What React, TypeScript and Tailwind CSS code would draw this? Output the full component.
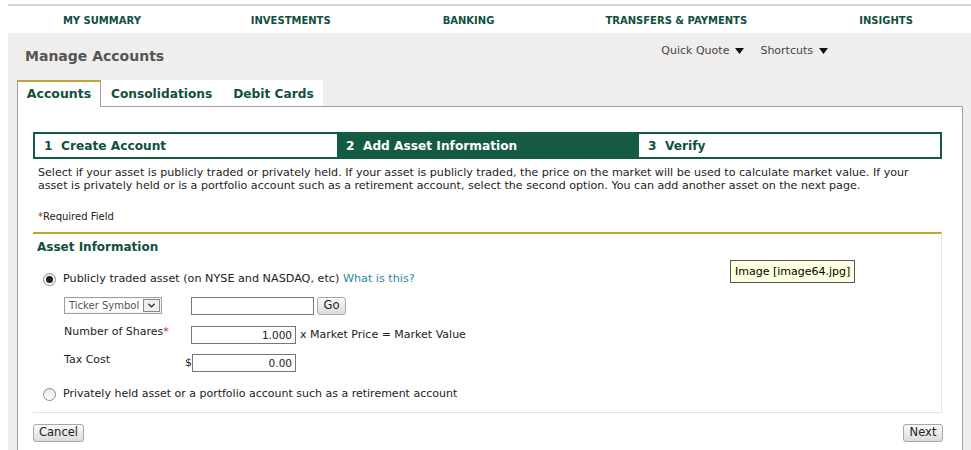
import { ChevronDown } from 'lucide-react';

const navItems = [
  { label: 'MY SUMMARY', w: 'w-[188px]' },
  { label: 'INVESTMENTS', w: 'w-[190px]' },
  { label: 'BANKING', w: 'w-[166px]' },
  { label: 'TRANSFERS & PAYMENTS', w: 'w-[250px]' },
  { label: 'INSIGHTS', w: 'w-[170px]' },
];

const Caret = () => (
  <svg width="9" height="6" viewBox="0 0 9 6" className="ml-[6px] inline-block">
    <path d="M0 0 L9 0 L4.5 6 Z" fill="#111" />
  </svg>
);

const Radio = ({ checked }: { checked?: boolean }) => (
  <span className="w-[13px] h-[13px] rounded-full border border-[#8a8a8a] bg-gradient-to-b from-[#e8e8e8] to-white flex items-center justify-center shrink-0">
    {checked && <span className="w-[7px] h-[7px] rounded-full bg-[#222]" />}
  </span>
);

const Btn = ({ children, cls }: { children: React.ReactNode; cls: string }) => (
  <button className={`h-[18px] rounded-[3px] border border-[#a8a8a8] bg-gradient-to-b from-[#fafafa] to-[#dcdcdc] text-[11.5px] text-[#222] leading-none flex items-center justify-center ${cls}`}>
    {children}
  </button>
);

export default function App() {
  return (
    <div className="w-[971px] h-[450px] overflow-hidden bg-white pl-[8px] text-[#222] font-['DejaVu_Sans',Verdana,sans-serif]">
      <div className="mt-[4px] h-[2px] bg-[#dcd5cc]" />
      <nav className="h-[27px] flex items-center pt-[2px]">
        {navItems.map((n) => (
          <div key={n.label} className={`${n.w} text-center text-[10px] font-bold text-[#0f5040]`}>
            {n.label}
          </div>
        ))}
      </nav>
      <div className="bg-[#f0eeec] h-[417px] pl-[9px] pr-[8px]">
        <div className="flex h-[47px]">
          <h1 className="pt-[13px] pl-[8px] text-[14px] font-bold text-[#555]">Manage Accounts</h1>
          <div className="ml-auto mr-[135px] pt-[10px] flex items-start text-[11px] text-[#444] gap-[16px]">
            <span className="flex items-center">Quick Quote<Caret /></span>
            <span className="flex items-center">Shortcuts<Caret /></span>
          </div>
        </div>
        <div className="flex h-[27px]">
          <div className="w-[84px] bg-white border-t-2 border-[#c5a23a] border-l border-r border-l-[#a0a0a0] border-r-[#a0a0a0] flex items-center justify-center text-[12.5px] font-bold text-[#0f5040]">
            Accounts
          </div>
          <div className="w-[222px] bg-white border-b border-[#a0a0a0] flex items-center text-[12.2px] font-bold text-[#0f5040] pl-[10px] pt-[2px] gap-[21px]">
            <span>Consolidations</span>
            <span>Debit Cards</span>
          </div>
          <div className="flex-1 border-b border-[#a0a0a0]" />
        </div>
        <div className="bg-white border-l border-r border-[#a0a0a0] h-[343px] pl-[15px] pr-[20px] pt-[25px]">
          <div className="h-[27px] border-2 border-[#155a43] flex text-[12.2px] font-bold">
            <div className="w-[302px] flex items-center pl-[9px] pt-[2px] text-[#0f5040]">1&nbsp;&nbsp;Create Account</div>
            <div className="w-[302px] flex items-center pl-[9px] pt-[2px] bg-[#155a43] text-white">2&nbsp;&nbsp;Add Asset Information</div>
            <div className="flex-1 flex items-center pl-[9px] pt-[2px] text-[#0f5040]">3&nbsp;&nbsp;Verify</div>
          </div>
          <p className="pl-[5px] pt-[7px] text-[11.1px] leading-[13px]">
            Select if your asset is publicly traded or privately held. If your asset is publicly traded, the price on the market will be used to calculate market value. If your
            <br />
            asset is privately held or is a portfolio account such as a retirement account, select the second option. You can add another asset on the next page.
          </p>
          <p className="pl-[5px] pt-[18px] text-[10px] leading-[13px]">
            <span className="text-[#d02020]">*</span>Required Field
          </p>
          <div className="relative mt-[9px] h-[181px] border-t-2 border-[#c5a23a] border-r border-b border-r-[#e2e2e2] border-b-[#e2e2e2]">
            <h2 className="pl-[4px] pt-[5px] text-[12px] font-bold text-[#0f5040] leading-[16px]">Asset Information</h2>
            <div className="pl-[10px] pt-[16px] flex items-center gap-[7px] text-[11.2px]">
              <Radio checked />
              <span>
                Publicly traded asset (on NYSE and NASDAQ, etc) <span className="text-[#2b8aa6]">What is this?</span>
              </span>
            </div>
            <div className="pl-[31px] pt-[9px] flex items-center text-[11px]">
              <div className="w-[98px] h-[17px] border border-[#a0a0a0] bg-[#f4f4f4] flex items-center p-[1px]">
                <span className="flex-1 bg-white h-full text-[10px] text-[#555] leading-[13px] pl-[3px] whitespace-nowrap overflow-hidden">Ticker Symbol</span>
                <span className="w-[17px] h-full border border-[#888] bg-[#eee] flex items-center justify-center shrink-0">
                  <ChevronDown size={11} strokeWidth={3} color="#222" />
                </span>
              </div>
              <div className="ml-[29px] w-[123px] h-[18px] border border-[#777]" />
              <Btn cls="ml-[3px] w-[29px]">Go</Btn>
            </div>
            <div className="pl-[31px] pt-[11px] flex text-[11px]">
              <span className="w-[127px] -mt-[2px]">
                Number of Shares<span className="text-[#d02020]">*</span>
              </span>
              <div className="w-[105px] h-[18px] border border-[#777] text-right pr-[3px] text-[10.5px] leading-[16px]">1.000</div>
              <span className="ml-[4px] leading-[18px]">x Market Price = Market Value</span>
            </div>
            <div className="pl-[31px] pt-[10px] flex text-[11px]">
              <span className="w-[121px] -mt-[2px]">Tax Cost</span>
              <span className="w-[7px] leading-[18px]">$</span>
              <div className="w-[104px] h-[18px] border border-[#777] text-right pr-[3px] text-[10.5px] leading-[16px]">0.00</div>
            </div>
            <div className="pl-[10px] pt-[14px] flex items-center gap-[7px] text-[11px]">
              <Radio />
              <span>Privately held asset or a portfolio account such as a retirement account</span>
            </div>
            <div className="absolute left-[697px] top-[26px] h-[23px] px-[4px] border border-[#555] bg-[#ffffe1] text-[11px] leading-[21px] text-black">
              Image [image64.jpg]
            </div>
          </div>
          <div className="flex justify-between pt-[11px]">
            <Btn cls="w-[51px]">Cancel</Btn>
            <Btn cls="w-[40px] mr-[-1px]">Next</Btn>
          </div>
        </div>
      </div>
    </div>
  );
}
